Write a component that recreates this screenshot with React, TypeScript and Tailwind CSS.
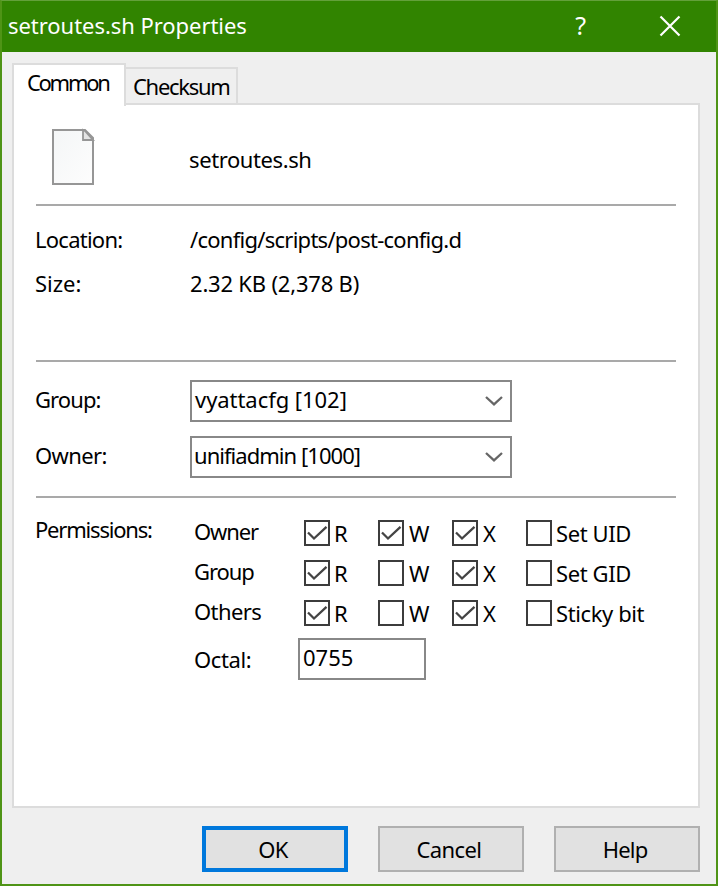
import type { ReactNode } from "react";

function Rule() {
  return <div className="ml-[22px] h-[2px] w-[640px] shrink-0 bg-[#a9a9a9]" />;
}

function Tick() {
  return (
    <svg width="22" height="22" viewBox="0 0 22 22" fill="none" stroke="#444" strokeWidth="2.3">
      <path d="M2 10.5 L8 16.5 L20.5 4.8" />
    </svg>
  );
}

function Check({ on, label, gap }: { on: boolean; label: string; gap: string }) {
  return (
    <label className="flex h-[40px] items-center">
      <span className="flex size-[26px] shrink-0 items-center justify-center border-2 border-[#3c3c3c] bg-white">
        {on && <Tick />}
      </span>
      <span className={`-mt-px ${gap}`}>{label}</span>
    </label>
  );
}

function Select({ children }: { children: ReactNode }) {
  return (
    <div className="flex h-[42px] w-[322px] items-center justify-between border-2 border-[#888888] pr-[7px]">
      {children}
      <svg width="18" height="10" viewBox="0 0 18 10" fill="none" stroke="#666" strokeWidth="2.3">
        <path d="M1 1 L9 8.4 L17 1" />
      </svg>
    </div>
  );
}

const ROWS = [
  { name: "Owner", track: "tracking-[-1.1px]", bits: [true, true, true], extra: "Set UID" },
  { name: "Group", track: "tracking-[-1.1px]", bits: [true, false, true], extra: "Set GID" },
  { name: "Others", track: "tracking-[-0.6px]", bits: [true, false, true], extra: "Sticky bit" },
];

export default function App() {
  return (
    <div className="flex h-[886px] w-[718px] flex-col border-2 border-t-1 border-[#4f9416] border-t-[#63a03a] bg-[#efefef] font-['Noto_Sans',sans-serif] text-[22px] leading-[40px] whitespace-nowrap text-black">
      <header className="flex h-[51px] shrink-0 items-center bg-[#318400] pl-[6px] text-white">
        <span className="-mt-[4px] flex-1 tracking-[-0.05px]">setroutes.sh Properties</span>
        <span className="-mt-[3px] mr-[73px] text-[25px]">?</span>
        <svg className="-mt-px mr-[35px]" width="22" height="22" viewBox="0 0 22 22" stroke="#fff" strokeWidth="2.2">
          <path d="M1.5 1.5 L20.5 20.5 M20.5 1.5 L1.5 20.5" />
        </svg>
      </header>

      <div className="ml-[10px] flex h-[53px] shrink-0 items-end">
        <div className="relative z-10 -mb-px flex h-[43px] w-[114px] items-center border-2 border-b-0 border-[#dcdcdc] bg-white pl-[13px] tracking-[-2.3px]">
          <span className="-mt-[8px]">Common</span>
        </div>
        <div className="flex h-[38px] w-[112px] items-center border-2 border-l-0 border-b-0 border-[#dcdcdc] pl-[7px] tracking-[-1.3px]">
          <span className="-mt-[3px]">Checksum</span>
        </div>
      </div>

      <main className="-mt-[2px] ml-[10px] flex h-[705px] w-[688px] shrink-0 flex-col border-2 border-[#dcdcdc] bg-white">
        <div className="flex h-[99px] shrink-0 items-center pt-[10px] pl-[37px]">
          <svg className="-mt-[5px]" width="44" height="58" viewBox="0 0 44 58" stroke="#969696" strokeWidth="2">
            <defs>
              <linearGradient id="paper" x1="0" y1="0" x2="1" y2="1">
                <stop offset="0" stopColor="#f4f6f7" />
                <stop offset="1" stopColor="#fdfdfd" />
              </linearGradient>
            </defs>
            <path d="M2 2 H34 L42 10 V56 H2 Z" fill="url(#paper)" />
            <path d="M32 2 V12 H42 L34 3 Z" fill="#e4e4e4" strokeWidth="1.8" />
          </svg>
          <span className="-mt-[2px] ml-[94px] tracking-[-0.4px]">setroutes.sh</span>
        </div>
        <Rule />
        <div className="grid h-[154px] shrink-0 grid-cols-[155px_1fr] grid-rows-[44px_44px] pt-[11px] pl-[21px] leading-[44px]">
          <span className="tracking-[-0.75px]">Location:</span>
          <span className="tracking-[-0.74px]">/config/scripts/post-config.d</span>
          <span>Size:</span>
          <span className="tracking-[-0.2px]">2.32 KB (2,378 B)</span>
        </div>
        <Rule />
        <div className="grid h-[134px] shrink-0 grid-cols-[155px_1fr] grid-rows-[42px_42px] gap-y-[14px] pt-[18px] pl-[21px]">
          <span className="-mt-[1px] tracking-[-0.9px]">Group:</span>
          <Select><span className="-mt-[4px] pl-[3px] tracking-[-0.05px]">vyattacfg [102]</span></Select>
          <span className="-mt-[1px] tracking-[-0.6px]">Owner:</span>
          <Select><span className="-mt-[4px] pl-[2px] tracking-[-0.96px]">unifiadmin [1000]</span></Select>
        </div>
        <Rule />
        <div className="flex pt-[15px] pl-[21px]">
          <span className="-mt-[4px] w-[159px] tracking-[-1.2px]">Permissions:</span>
          <div className="flex flex-col">
            {ROWS.map((r) => (
              <div key={r.name} className="grid h-[40px] grid-cols-[110px_74px_74px_74px_auto]">
                <span className={`-mt-[2px] ${r.track}`}>{r.name}</span>
                <Check on={r.bits[0]} label="R" gap="ml-[4px]" />
                <Check on={r.bits[1]} label="W" gap="ml-[5px] tracking-[-1px]" />
                <Check on={r.bits[2]} label="X" gap="ml-[5px]" />
                <Check on={false} label={r.extra} gap="ml-[4px] tracking-[-0.4px]" />
              </div>
            ))}
            <div className="mt-[5px] flex h-[42px]">
              <span className="mt-[1px] w-[104px] tracking-[-0.4px]">Octal:</span>
              <div className="flex w-[128px] items-center border-2 border-[#888888] pl-[3px]">
                <span className="-mt-[4px]">0755</span>
              </div>
            </div>
          </div>
        </div>
      </main>

      <footer className="mt-[18px] mr-[16px] flex justify-end gap-[30px]">
        <button className="flex h-[46px] w-[146px] items-center justify-center border-4 border-[#0078dc] bg-[#e1e1e1] pr-[4px] tracking-[-0.6px]">OK</button>
        <button className="flex h-[46px] w-[146px] items-center justify-center border-2 border-[#b0b0b0] bg-[#e1e1e1] pr-[4px] tracking-[-0.6px]">Cancel</button>
        <button className="flex h-[46px] w-[146px] items-center justify-center border-2 border-[#b0b0b0] bg-[#e1e1e1] pr-[4px] tracking-[-0.8px]">Help</button>
      </footer>
    </div>
  );
}
